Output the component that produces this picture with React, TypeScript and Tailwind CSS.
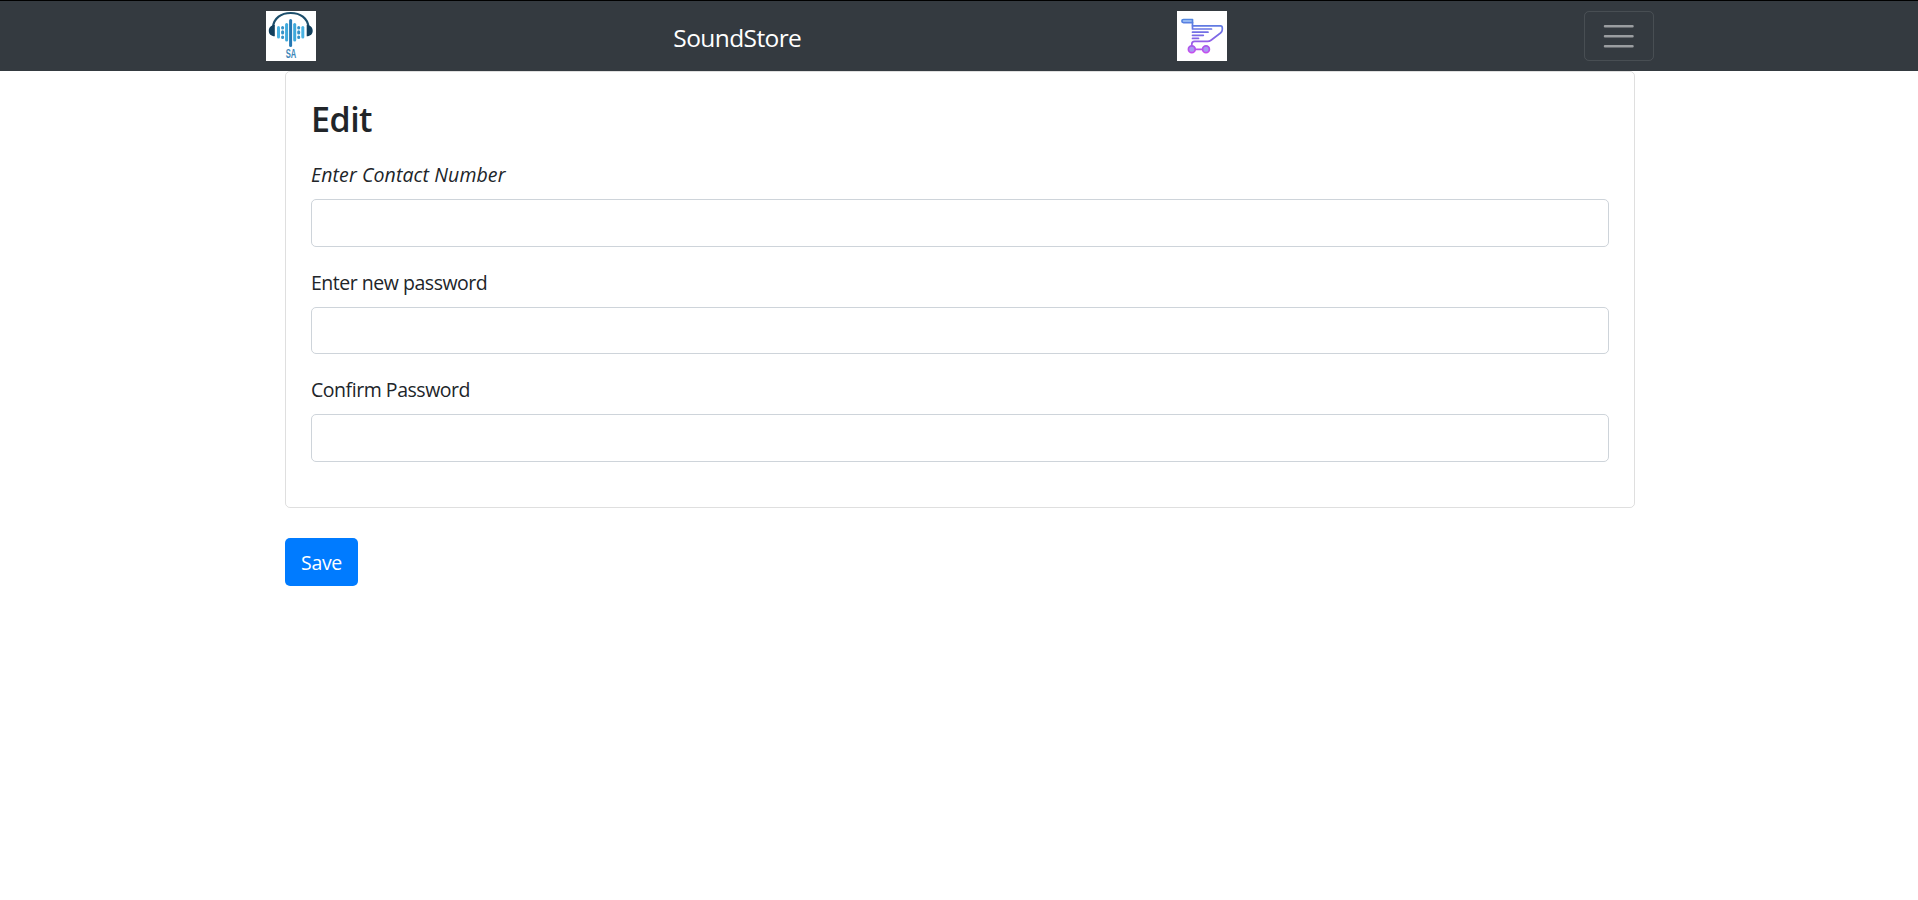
function HeadphonesLogo() {
  return (
    <svg viewBox="0 0 50 50" className="block size-[50px] bg-white" aria-hidden="true">
      <path d="M7 16C8 7 15 2 24.700 2S41.500 7 42.500 16" fill="none" stroke="#1d4f6c" strokeWidth="2.200" />
      <path d="M8.800 14C5 14 2.800 16.500 2.800 19.700s2.200 5.500 6 5.500zM40.700 14c3.800 0 6 2.500 6 5.700s-2.200 5.500-6 5.500z" fill="#123f5c" />
      <g strokeLinecap="round" strokeWidth="3">
        <path d="M12.500 16.500v9.500" stroke="#49b3e3" />
        <path d="M16.600 16.500v.5M16.600 20.700v1.200M16.600 26v.5" stroke="#3492c8" />
        <path d="M20.600 13.500v15.500" stroke="#3fa9dc" />
        <path d="M24.600 9.500v25" stroke="#2478b3" />
        <path d="M28.700 13.500v15.500" stroke="#3fa9dc" />
        <path d="M32.700 16.500v.5M32.700 20.700v1.200M32.700 26v.5" stroke="#3492c8" />
        <path d="M36.800 16.500v9.500" stroke="#49b3e3" />
      </g>
      <text x="24.900" y="47.300" textAnchor="middle" textLength="10.500" lengthAdjust="spacingAndGlyphs" fontSize="12" fontWeight="700" fontFamily="Liberation Sans, sans-serif" fill="#3d86b8">SA</text>
    </svg>
  );
}

function CartIcon() {
  return (
    <svg viewBox="0 0 50 50" className="block size-[50px] bg-white" aria-hidden="true">
      <defs>
        <linearGradient id="cart-stroke" x1="0" y1="8" x2="0" y2="43" gradientUnits="userSpaceOnUse">
          <stop offset="0" stopColor="#4f86e0" />
          <stop offset="0.5" stopColor="#7d68e6" />
          <stop offset="1" stopColor="#cc4cee" />
        </linearGradient>
      </defs>
      <g fill="none" stroke="url(#cart-stroke)" strokeWidth="1.700" strokeLinejoin="round" strokeLinecap="round">
        <path d="M15.500 8.500H6.500a1.500 1.500 0 0 0 0 3.200H15.500Z" fill="#a9c8f8" />
        <path d="M15.500 11.500V14.800H43.500Q45.300 14.800 45.300 17V18.500Q45.300 20.500 43.500 22L34 29.200Q32.500 30.300 30.500 30.300H17.500Q14.800 30.300 14.800 33V35" />
        <path d="M15.500 14.800V18H34.500M15.500 21.200H31M15.500 24.300H26.300M15.500 27.400H21.500" />
        <path d="M18.500 38.300l7 .1" />
        <circle cx="14.800" cy="38.300" r="3.400" fill="#a99af2" />
        <circle cx="29" cy="38.300" r="3.400" fill="#a99af2" />
      </g>
    </svg>
  );
}

function Navbar() {
  return (
    <header className="h-[71px] border-t border-black bg-[#343a40]">
      <nav className="mx-auto flex h-[70px] w-[1388px] translate-x-px items-center justify-between">
        <a href="#" aria-label="Home"><HeadphonesLogo /></a>
        <a href="#" className="mr-[18px] pt-[3px] text-[24.500px] leading-[37.500px] tracking-[-0.600px] text-white">SoundStore</a>
        <a href="#" aria-label="Cart"><CartIcon /></a>
        <button type="button" aria-label="Toggle navigation" className="flex h-[50px] w-[70px] items-center justify-center rounded-[5px] border border-white/10">
          <svg viewBox="0 0 30 30" className="size-[37.500px]" aria-hidden="true">
            <path d="M4 7.400h22M4 15.400h22M4 23.400h22" stroke="#fff" strokeOpacity="0.5" strokeWidth="2" strokeLinecap="round" />
          </svg>
        </button>
      </nav>
    </header>
  );
}

function Field({ id, label, type, labelClass }: { id: string; label: string; type: string; labelClass: string }) {
  return (
    <div className="mb-5 flex flex-col items-start">
      <label htmlFor={id} className={`mb-[9px] pt-px text-[19.500px] leading-[30px] ${labelClass}`}>{label}</label>
      <input id={id} type={type} className="h-[47.500px] w-full rounded-[5px] border border-[#ced4da] bg-white px-[15px] outline-none" />
    </div>
  );
}

export default function App() {
  return (
    <div className="min-h-[900px] bg-white font-['Open_Sans','Noto_Sans',sans-serif] text-[#212529]">
      <Navbar />
      <main className="mx-auto w-[1350px] translate-x-px">
        <section className="h-[437px] rounded-[5px] border border-black/[.125] p-[25px]">
          <h3 className="mb-[19px] pt-px text-[34px] leading-[42px] font-semibold tracking-[-0.500px]">Edit</h3>
          <Field id="contact" label="Enter Contact Number" type="text" labelClass="italic tracking-[0.110px]" />
          <Field id="password" label="Enter new password" type="password" labelClass="tracking-[-0.480px]" />
          <Field id="confirm" label="Confirm Password" type="password" labelClass="tracking-[-0.460px]" />
        </section>
        <button type="button" className="mt-[30px] h-12 w-[73px] rounded-[5px] bg-[#007bff] pt-0.5 text-[19.500px] leading-[30px] tracking-[-0.300px] text-white">Save</button>
      </main>
    </div>
  );
}
